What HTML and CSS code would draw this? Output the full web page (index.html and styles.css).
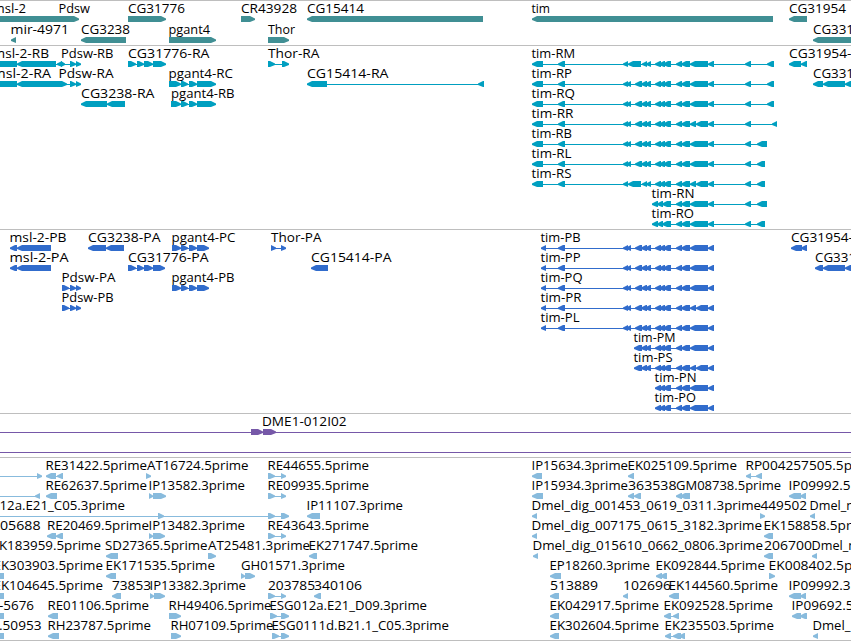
FILE: index.html
```html
<!DOCTYPE html>
<html lang="en">
<head>
<meta charset="utf-8">
<title>Genome browser</title>
<link rel="stylesheet" href="styles.css">
</head>
<body>
<main class="browser">
  <section class="track track-genes"><svg class="canvas" data-track="genes" data-pitch="21"></svg></section>
  <section class="track track-transcripts"><svg class="canvas" data-track="transcripts" data-pitch="20"></svg></section>
  <section class="track track-proteins"><svg class="canvas" data-track="proteins" data-pitch="20"></svg></section>
  <section class="track track-oligos"><svg class="canvas" data-track="oligos" data-pitch="20"></svg></section>
  <section class="track track-ests"><svg class="canvas" data-track="ests" data-pitch="20"></svg></section>
</main>
<script src="tracks.js"></script>
</body>
</html>
```
FILE: styles.css
```css
body {
  margin: 0;
  background: #fff;
  overflow: hidden;
}

.browser {
  display: flex;
  flex-direction: column;
  width: 851px;
  height: 641px;
  box-sizing: border-box;
  border-bottom: 1px solid #bebebe;
}

.track {
  box-sizing: border-box;
  border-top: 1px solid #bebebe;
  overflow: hidden;
}

.track-genes { height: 45px; color: #408f94; }
.track-transcripts { height: 184px; color: #009fc0; }
.track-proteins { height: 184px; color: #316ccc; }
.track-oligos { height: 44px; color: #7658a8; }
.track-ests { height: 183px; color: #88bbdd; }

.canvas {
  display: block;
  width: 100%;
  height: 100%;
}

.glyph { fill: currentColor; }

.label {
  fill: #000;
  font-family: "Open Sans", "Noto Sans", sans-serif;
  font-size: 12px;
}
```
FILE: tracks.js
```js
// Shared exon runs of the tim gene. "L" points left, "R" right, "B" is a plain block, "-" a bare line.
const head = "L532-543 L558-565 ";
const phead = "L541-546 L558-565 ";
const pair = "L623-628 L626-631 ";
const mid = "L635-642 L641-647 L645-651 ";
const trio = "L655-661 L659-665 L663-671 ";
const big = "L676-682 L681-690 L690-708 L708-714 ";
const split = "L676-682 L681-690 L690-696 L696-708 L708-714 ";
const retained = "L623-628 L628-641 L642-647 L646-651 ";
const shortStart = "L652-658 L657-663 L662-671 ";
const tail = "L745-751 ";
const pg = " R181-188 R189-197 ";
const thor = "R268-275 R281-286";

// Each feature: [row, label, label start, label end, glyphs]
const tracks = {
  genes: [
    [0, "msl-2", -7.5, 26, "R-9-79"],
    [0, "Pdsw", 58.5, 90, ""],
    [0, "CG31776", 128, 185, "R128-166"],
    [0, "CR43928", 241, 297, "R241-255"],
    [0, "CG15414", 307, 364, "L307-483"],
    [0, "tim", 531.5, 550, "L532-773"],
    [0, "CG31954", 789, 846, "L789-807"],
    [1, "mir-4971", 10.5, 69, "L11-16"],
    [1, "CG3238", 81, 130, "L81-126"],
    [1, "pgant4", 168.5, 210, "R169-216"],
    [1, "Thor", 268, 295, "R268-289"],
    [1, "CG331", 813, 854, "L813-870"]
  ],
  transcripts: [
    [0, "msl-2-RB", -7.5, 49, "B-9-17 L17-56 L57-62 R61-65 R70-76 R76-81"],
    [0, "Pdsw-RB", 61, 113.5, ""],
    [0, "CG31776-RA", 128, 209.5, "R128-136 R137-144 R144-153 R153-166"],
    [0, "Thor-RA", 268, 319.5, "R268-275 R282-289"],
    [0, "tim-RM", 531.5, 575, head + retained + trio + big + tail + "L767-774"],
    [0, "CG31954-", 789, 851.5, "L789-801 L801-807"],
    [1, "msl-2-RA", -7.5, 51, "B-9-17 L17-60 R59-67 R70-76 R76-81"],
    [1, "Pdsw-RA", 58.5, 113.5, ""],
    [1, "pgant4-RC", 168.5, 233, "R169-181" + pg + "R197-216"],
    [1, "CG15414-RA", 307, 388.5, "L307-327 L478-484"],
    [1, "tim-RP", 531.5, 572, head + pair + mid + trio + big + tail + "L767-774"],
    [1, "CG331", 813, 854, "L813-823 L823-845 L845-856"],
    [2, "CG3238-RA", 81, 154.5, "L81-107 L107-125"],
    [2, "pgant4-RB", 171, 234.5, "R171-181" + pg + "R197-216"],
    [2, "tim-RQ", 531.5, 575, head + pair + mid + trio + big + tail + "L767-774"],
    [3, "tim-RR", 531.5, 573.5, head + pair + mid + trio + split + tail + "L772-777"],
    [4, "tim-RB", 531.5, 572, head + pair + mid + trio + big + tail + "L757-767"],
    [5, "tim-RL", 531.5, 571.5, head + pair + mid + trio + big + tail + "L757-765"],
    [6, "tim-RS", 531.5, 571.5, head + retained + trio + split + tail + "L757-765"],
    [7, "tim-RN", 651.5, 694.5, shortStart + big + tail + "L757-767"],
    [8, "tim-RO", 651.5, 694, shortStart + big + tail + "L757-765"]
  ],
  proteins: [
    [0, "msl-2-PB", 9.5, 66.5, "L10-17 L17-51"],
    [0, "CG3238-PA", 88, 160.5, "L88-106 L106-124"],
    [0, "pgant4-PC", 171.5, 235.5, "R172-181" + pg + "R197-209"],
    [0, "Thor-PA", 271, 321.5, "R271-276 R281-286"],
    [0, "tim-PB", 540.5, 580.5, phead + pair + mid + trio + big],
    [0, "CG31954-", 791, 853, "L791-802 L801-807"],
    [1, "msl-2-PA", 9.5, 68.5, "L10-17 L17-51"],
    [1, "CG31776-PA", 128, 208.5, "R128-136 R137-144 R144-153 R153-165"],
    [1, "CG15414-PA", 311, 391.5, "L311-328"],
    [1, "tim-PP", 540.5, 580.5, phead + pair + mid + trio + big],
    [1, "CG331", 815, 856, "L815-823 L823-845 L845-856"],
    [2, "Pdsw-PA", 61.5, 115.5, "R62-69 R70-76 R76-81"],
    [2, "pgant4-PB", 171.5, 234.5, "R172-181" + pg + "R197-209"],
    [2, "tim-PQ", 540.5, 582.5, phead + pair + mid + trio + big],
    [3, "Pdsw-PB", 61.5, 113.5, "R62-69 R70-76 R76-81"],
    [3, "tim-PR", 540.5, 581.5, phead + pair + mid + trio + split],
    [4, "tim-PL", 540.5, 579.5, phead + pair + mid + trio + big],
    [5, "tim-PM", 633.5, 675.5, mid.replace("635", "634") + trio + big],
    [6, "tim-PS", 633.5, 672.5, mid.replace("635", "634") + trio + split],
    [7, "tim-PN", 654.5, 696.5, trio + big],
    [8, "tim-PO", 654.5, 696, trio + big]
  ],
  oligos: [
    [0, "DME1-012I02", 262, 346.5, "--9-860 R251-263 R263-276"],
    [1, "", 0, 0, "--9-860"]
  ],
  ests: [
    [0, "", 0, 0, "--9-1 R37-42"],
    [0, "RE31422.5prime", 45.5, 147, "L46-56 L57-63"],
    [0, "AT16724.5prime", 147, 248.5, "R146-151"],
    [0, "RE44655.5prime", 267.5, 369, thor],
    [0, "IP15634.3prime", 531.5, 628, "L532-542"],
    [0, "EK025109.5prime", 627.5, 737, "L628-634"],
    [0, "RP004257505.5p", 745.5, 852, "L746-751 L756-762"],
    [1, "", 0, 0, "--9-1 L35-40"],
    [1, "RE62637.5prime", 45.5, 147, "L46-57"],
    [1, "IP13582.3prime", 148.5, 245, "R149-153 R153-166"],
    [1, "RE09935.5prime", 267.5, 369, thor],
    [1, "IP15934.3prime", 531.5, 628, "L532-543"],
    [1, "363538", 628, 676.5, "L628-634 L634-641"],
    [1, "GM08738.5prime", 676, 781, "L676-682 L680-690"],
    [1, "IP09992.5", 788.5, 850.5, "L789-801 L800-806"],
    [2, "12a.E21_C05.3prime", -0.5, 125, "--9-1 R158-164 R268-275 R281-289"],
    [2, "IP11107.3prime", 306.5, 403, "L307-320"],
    [2, "Dmel_dig_001453_0619_0311.3prime", 531.5, 761, "L532-537"],
    [2, "449502", 760.5, 807, "R760-765"],
    [2, "Dmel_n", 809.5, 854, "L810-815"],
    [3, "05688", 0, 40.5, ""],
    [3, "RE20469.5prime", 47, 149, "L47-56 L56-63"],
    [3, "IP13482.3prime", 148.5, 245, "R149-153 R153-165"],
    [3, "RE43643.5prime", 267.5, 369, thor],
    [3, "Dmel_dig_007175_0615_3182.3prime", 531.5, 762, "L532-537"],
    [3, "EK158858.5pr", 763.5, 851.5, "L764-773"],
    [4, "EK183959.5prime", -8.5, 101, ""],
    [4, "SD27365.5prime", 105, 207.5, "L106-118"],
    [4, "AT25481.3prime", 208, 310, "R208-216"],
    [4, "EK271747.5prime", 308.5, 418, "L309-317"],
    [4, "Dmel_dig_015610_0662_0806.3prime", 532.5, 763, "L533-538"],
    [4, "206700", 764, 812, "L764-773"],
    [4, "Dmel_n", 811.5, 856, "L812-817"],
    [5, "EK303903.5prime", -6.5, 103, "B-9-4"],
    [5, "EK171535.5prime", 105.5, 215, "L106-116"],
    [5, "GH01571.3prime", 241, 345, "R241-245 R245-255"],
    [5, "EP18260.3prime", 549.5, 650, "L550-561"],
    [5, "EK092844.5prime", 655.5, 765, "L656-662 L660-667"],
    [5, "EK008402.5p", 768.5, 852.5, "R769-775"],
    [6, "EK104645.5prime", -6.5, 103, "B-9-4"],
    [6, "73853", 112, 151, "L112-121"],
    [6, "IP13382.3prime", 149.5, 246, "R150-154 R154-165"],
    [6, "203785", 268, 315, thor],
    [6, "340106", 314, 362, "L314-321"],
    [6, "513889", 550, 598, "L550-559"],
    [6, "102696", 623, 671, "L623-628"],
    [6, "EK144560.5prime", 668.5, 778, "L669-679"],
    [6, "IP09992.3", 788.5, 850.5, "L789-801 L800-806"],
    [7, "-5676", -1, 34, "B-9-4"],
    [7, "RE01106.5prime", 47.5, 149, "L48-58"],
    [7, "RH49406.5prime", 168.5, 271.5, "R169-181"],
    [7, "ESG012a.E21_D09.3prime", 269.5, 427, "R270-277 R281-289"],
    [7, "EK042917.5prime", 549.5, 659, "L550-559"],
    [7, "EK092528.5prime", 663.5, 773, "L664-671 L673-679"],
    [7, "IP09692.5", 791.5, 853.5, "L792-801 L800-807"],
    [8, ".50953", -1, 41.5, "B-9-4"],
    [8, "RH23787.5prime", 47.5, 151, "L48-59"],
    [8, "RH07109.5prime", 170.5, 273.5, "R171-181"],
    [8, "ESG0111d.B21.1_C05.3prime", 271.5, 449, "R272-279 R281-289"],
    [8, "EK302604.5prime", 549.5, 659, "L550-559"],
    [8, "EK235503.5prime", 664.5, 774, "L665-671 L673-681 L679-685"],
    [8, "Dmel_", 812.5, 850.5, "L813-818"]
  ]
};

const NS = "http://www.w3.org/2000/svg";

function add(parent, name, attrs) {
  const el = document.createElementNS(NS, name);
  for (const key in attrs) el.setAttribute(key, attrs[key]);
  parent.appendChild(el);
  return el;
}

// Arrow outline, 6px tall, with a slightly rounded head that tapers to a tip at one end.
function outline(dir, a, b, y) {
  const t = y, u = y + 6, m = y + 3.4;
  const h = Math.min(5, b - a);
  if (dir === "B") return `M${a} ${t}H${b}V${u}H${a}Z`;
  if (dir === "L") return `M${b} ${t}H${a + h}L${a} ${m - 1}V${m + 0.6}L${a + h} ${u}H${b}Z`;
  return `M${a} ${t}H${b - h}L${b} ${m - 1}V${m + 0.6}L${b - h} ${u}H${a}Z`;
}

document.querySelectorAll(".canvas").forEach(svg => {
  const pitch = Number(svg.dataset.pitch);
  for (const [row, text, x, end, glyphs] of tracks[svg.dataset.track]) {
    const y = 15 + row * pitch;
    const parts = glyphs.trim().split(/\s+/).filter(Boolean).map(s => {
      const m = s.match(/^([LRB-])(-?\d+)-(\d+)$/);
      return [m[1], Number(m[2]), Number(m[3])];
    });
    if (parts.length > 1 || (parts[0] && parts[0][0] === "-")) {
      const from = Math.min(...parts.map(p => p[1]));
      const to = Math.max(...parts.map(p => p[2]));
      add(svg, "rect", { class: "glyph", x: from, y: y + 3, width: to - from, height: 1 });
    }
    for (const [dir, a, b] of parts) {
      if (dir !== "-") add(svg, "path", { class: "glyph", d: outline(dir, a, b, y) });
    }
    if (text) {
      const label = add(svg, "text", {
        class: "label", x, y: y - 3, textLength: end - x, lengthAdjust: "spacingAndGlyphs"
      });
      label.textContent = text;
    }
  }
});
```
